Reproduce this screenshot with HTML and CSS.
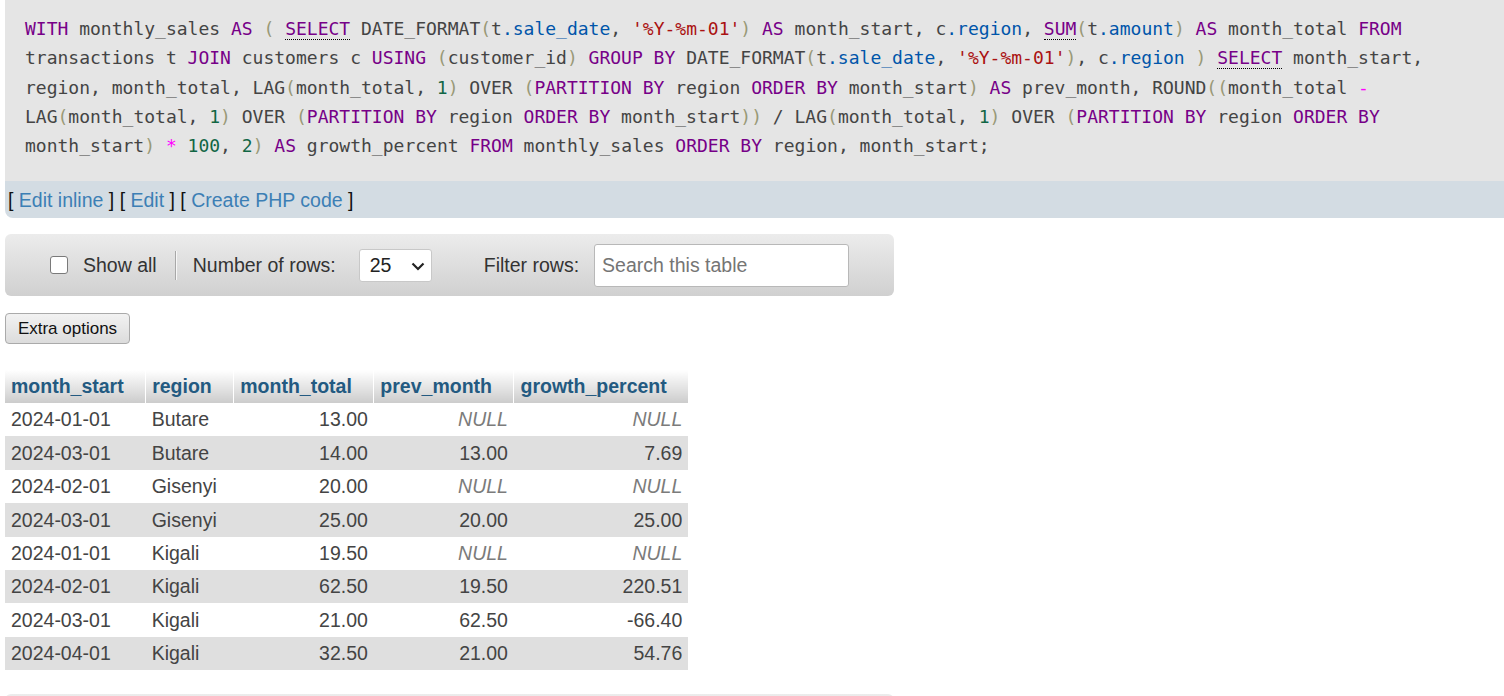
FILE: index.html
```html
<!DOCTYPE html>
<html lang="en">
<head>
<meta charset="utf-8">
<title>SQL result</title>
<link rel="stylesheet" href="styles.css">
</head>
<body>
<div class="sql"><span class="k">WITH</span> monthly_sales <span class="k">AS</span> <span class="b">(</span> <span class="k u">SELECT</span> DATE_FORMAT<span class="b">(</span>t<span class="v">.sale_date</span>, <span class="s">'%Y-%m-01'</span><span class="b">)</span> <span class="k">AS</span> month_start, c<span class="v">.region</span>, <span class="k u">SUM</span><span class="b">(</span>t<span class="v">.amount</span><span class="b">)</span> <span class="k">AS</span> month_total <span class="k">FROM</span> transactions t <span class="k">JOIN</span> customers c <span class="k">USING</span> <span class="b">(</span>customer_id<span class="b">)</span> <span class="k">GROUP BY</span> DATE_FORMAT<span class="b">(</span>t<span class="v">.sale_date</span>, <span class="s">'%Y-%m-01'</span><span class="b">)</span>, c<span class="v">.region</span> <span class="b">)</span> <span class="k u">SELECT</span> month_start, region, month_total, LAG<span class="b">(</span>month_total, <span class="n">1</span><span class="b">)</span> OVER <span class="b">(</span><span class="k">PARTITION BY</span> region <span class="k">ORDER BY</span> month_start<span class="b">)</span> <span class="k">AS</span> prev_month, ROUND<span class="b">((</span>month_total <span class="o">-</span> LAG<span class="b">(</span>month_total, <span class="n">1</span><span class="b">)</span> OVER <span class="b">(</span><span class="k">PARTITION BY</span> region <span class="k">ORDER BY</span> month_start<span class="b">))</span> / LAG<span class="b">(</span>month_total, <span class="n">1</span><span class="b">)</span> OVER <span class="b">(</span><span class="k">PARTITION BY</span> region <span class="k">ORDER BY</span> month_start<span class="b">)</span> <span class="o">*</span> <span class="n">100</span>, <span class="n">2</span><span class="b">)</span> <span class="k">AS</span> growth_percent <span class="k">FROM</span> monthly_sales <span class="k">ORDER BY</span> region, month_start;</div>
<div class="tools">[ <a href="#">Edit inline</a> ] [ <a href="#">Edit</a> ] [ <a href="#">Create PHP code</a> ]</div>

<div class="navbar">
  <input type="checkbox" class="chk" id="showall">
  <label for="showall" class="lbl-show">Show all</label>
  <span class="divider"></span>
  <span class="lbl-rows">Number of rows:</span>
  <span class="selwrap">
    <select class="sel"><option>25</option><option>50</option><option>100</option></select>
    <svg class="chev" width="14" height="9" viewBox="0 0 14 9"><path d="M1.5 1.5 L7 7 L12.5 1.5" fill="none" stroke="#222" stroke-width="2.2"/></svg>
  </span>
  <span class="lbl-filter">Filter rows:</span>
  <input type="text" class="search" placeholder="Search this table">
</div>

<div class="extra"><button class="btn">Extra options</button></div>

<table class="results">
  <thead>
    <tr><th>month_start</th><th>region</th><th>month_total</th><th>prev_month</th><th>growth_percent</th></tr>
  </thead>
  <tbody>
    <tr><td>2024-01-01</td><td>Butare</td><td class="r">13.00</td><td class="r null">NULL</td><td class="r null">NULL</td></tr>
    <tr><td>2024-03-01</td><td>Butare</td><td class="r">14.00</td><td class="r">13.00</td><td class="r">7.69</td></tr>
    <tr><td>2024-02-01</td><td>Gisenyi</td><td class="r">20.00</td><td class="r null">NULL</td><td class="r null">NULL</td></tr>
    <tr><td>2024-03-01</td><td>Gisenyi</td><td class="r">25.00</td><td class="r">20.00</td><td class="r">25.00</td></tr>
    <tr><td>2024-01-01</td><td>Kigali</td><td class="r">19.50</td><td class="r null">NULL</td><td class="r null">NULL</td></tr>
    <tr><td>2024-02-01</td><td>Kigali</td><td class="r">62.50</td><td class="r">19.50</td><td class="r">220.51</td></tr>
    <tr><td>2024-03-01</td><td>Kigali</td><td class="r">21.00</td><td class="r">62.50</td><td class="r">-66.40</td></tr>
    <tr><td>2024-04-01</td><td>Kigali</td><td class="r">32.50</td><td class="r">21.00</td><td class="r">54.76</td></tr>
  </tbody>
</table>

<div class="navbar bottom"></div>
</body>
</html>
```
FILE: styles.css
```css
html, body {
  margin: 0;
  padding: 0;
}
body {
  padding-left: 5px;
  font-family: "Liberation Sans", Arial, sans-serif;
  font-size: 19.5px;
  color: #444;
  background: #fff;
  overflow: hidden;
}

/* SQL box */
.sql {
  background: #e5e5e5;
  padding: 14px 25px 21px 20px;
  font-family: "DejaVu Sans Mono", "Liberation Mono", monospace;
  font-size: 18px;
  line-height: 29.3px;
  color: #444;
}
.sql .k { color: #770088; }
.sql .u { border-bottom: 1px dotted #000; }
.sql .b { color: #999977; }
.sql .s { color: #aa1111; }
.sql .n { color: #116644; }
.sql .v { color: #0055aa; }
.sql .o { color: #ff00ff; }

.tools {
  background: #d3dce3;
  height: 37px;
  line-height: 38px;
  padding-left: 3px;
  color: #111;
  border-bottom-left-radius: 8px;
}
.tools a {
  color: #3c7fb5;
  text-decoration: none;
}

/* navigation bar */
.navbar {
  margin-top: 16px;
  width: 889px;
  height: 62px;
  border-radius: 6px;
  background: linear-gradient(#ececec, #d0d0d0);
  display: flex;
  align-items: center;
  color: #333;
}
.chk {
  appearance: none;
  -webkit-appearance: none;
  margin: 0 0 0 45px;
  width: 18px;
  height: 18px;
  border: 1.5px solid #7a7a7a;
  border-radius: 3px;
  background: #fff;
  box-sizing: border-box;
}
.lbl-show {
  margin-left: 15px;
}
.divider {
  margin-left: 18px;
  height: 29px;
  border-left: 1px solid #a8a8a8;
  border-right: 1px solid #f7f7f7;
}
.lbl-rows {
  margin-left: 16px;
}
.selwrap {
  position: relative;
  margin-left: 23px;
  width: 73px;
  height: 33px;
}
.sel {
  appearance: none;
  -webkit-appearance: none;
  width: 73px;
  height: 33px;
  box-sizing: border-box;
  border: 1px solid #c8c8c8;
  border-radius: 3px;
  background: #fff;
  font-family: "Liberation Sans", Arial, sans-serif;
  font-size: 19.5px;
  color: #222;
  padding: 0 0 0 10px;
  margin: 0;
}
.chev {
  position: absolute;
  left: 52px;
  top: 13px;
  pointer-events: none;
}
.lbl-filter {
  margin-left: 52px;
}
.search {
  margin-left: 15px;
  width: 255px;
  height: 43px;
  box-sizing: border-box;
  border: 1px solid #b8b8b8;
  border-radius: 3px;
  background: #fff;
  padding: 0 7px;
  font-family: "Liberation Sans", Arial, sans-serif;
  font-size: 19.5px;
  color: #333;
}
.search::placeholder {
  color: #757575;
}

/* extra options */
.extra {
  margin-top: 17px;
}
.btn {
  width: 125px;
  height: 31px;
  box-sizing: border-box;
  border: 1px solid #aaa;
  border-radius: 4px;
  background: linear-gradient(#f2f2f2, #dcdcdc);
  font-family: "Liberation Sans", Arial, sans-serif;
  font-size: 17px;
  color: #111;
  padding: 0;
  margin: 0;
}

/* results table */
.results {
  margin-top: 26px;
  border-collapse: collapse;
  border-spacing: 0;
}
.results th {
  background: linear-gradient(#ffffff, #cccccc);
  color: #235a81;
  font-weight: bold;
  text-align: left;
  padding: 5px 21.5px 5px 6px;
  line-height: 22.4px;
}
.results th + th {
  border-left: 1px solid #fff;
}
.results td {
  padding: 5.5px 6px;
  line-height: 22.4px;
  color: #444;
  white-space: nowrap;
}
.results td.r {
  text-align: right;
}
.results td.null {
  font-style: italic;
  color: #7b7b7b;
}
.results tbody tr:nth-child(even) td {
  background: #dfdfdf;
}

.bottom {
  margin-top: 24px;
  height: 40px;
}
```
